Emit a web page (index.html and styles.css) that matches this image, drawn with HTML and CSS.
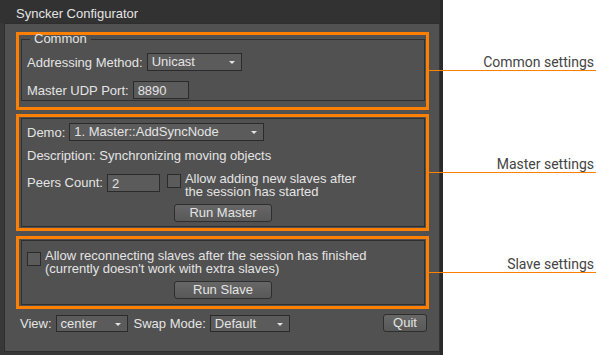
FILE: index.html
```html
<!DOCTYPE html>
<html lang="en">
<head>
    <meta charset="UTF-8">
    <title>Syncker Configurator</title>
    <link rel="stylesheet" href="styles.css">
</head>
<body>

<div class="window">
    <div class="title">Syncker Configurator</div>

    <div class="panel">
        <div class="mark mark-common">
            <fieldset class="group">
                <legend>Common</legend>
                <div class="row row-addr">
                    <span>Addressing Method:</span>
                    <div class="combo combo-addr">Unicast<i class="arrow"></i></div>
                </div>
                <div class="row row-port">
                    <span>Master UDP Port:</span>
                    <div class="edit edit-port">8890</div>
                </div>
            </fieldset>
            <div class="callout callout-common">Common settings</div>
        </div>

        <div class="mark mark-master">
            <div class="group">
                <div class="row row-demo">
                    <span>Demo:</span>
                    <div class="combo combo-demo">1. Master::AddSyncNode<i class="arrow"></i></div>
                </div>
                <div class="row row-desc">Description: Synchronizing moving objects</div>
                <div class="row row-peers">
                    <span>Peers Count:</span>
                    <div class="edit edit-peers">2</div>
                    <div class="check"></div>
                    <span class="check-text">Allow adding new slaves after<br>the session has started</span>
                </div>
                <div class="btn-row"><div class="btn btn-run">Run Master</div></div>
            </div>
            <div class="callout callout-master">Master settings</div>
        </div>

        <div class="mark mark-slave">
            <div class="group">
                <div class="row row-reconnect">
                    <div class="check"></div>
                    <span class="check-text">Allow reconnecting slaves after the session has finished<br>(currently doesn't work with extra slaves)</span>
                </div>
                <div class="btn-row btn-row-slave"><div class="btn btn-run">Run Slave</div></div>
            </div>
            <div class="callout callout-slave">Slave settings</div>
        </div>

        <div class="footer">
            <span>View:</span>
            <div class="combo combo-view">center<i class="arrow"></i></div>
            <span class="swap-label">Swap Mode:</span>
            <div class="combo combo-swap">Default<i class="arrow"></i></div>
            <div class="btn btn-quit">Quit</div>
        </div>
    </div>
</div>

</body>
</html>
```

FILE: styles.css
```css
body {
    margin: 0;
    background: #fff;
    font-family: "Liberation Sans", Arial, sans-serif;
    font-size: 13px;
    color: #e4e4e4;
}
.window {
    width: 443px;
    height: 355px;
    background: #383838;
    border-right: 3px solid #2a2a2a;
    box-sizing: border-box;
    display: flex;
    flex-direction: column;
}
.title {
    height: 23px;
    line-height: 28px;
    padding-left: 16px;
    background: #323232;
    font-size: 13px;
}
.panel {
    margin: 0 0 3px 4px;
    flex: 1;
    background: #515151;
    border: 1px solid #2e2e2e;
    border-right-color: #333;
    padding: 8px 0 0 11px;
    display: flex;
    flex-direction: column;
}
.mark {
    position: relative;
    width: 413px;
    border: 3px solid #ff7f00;
    box-sizing: border-box;
    padding: 1px 1px 1px 2px;
}
.mark-common { height: 78px; }
.mark-master { height: 117px; margin-top: 4px; }
.mark-slave { height: 73px; margin-top: 5px; }

.group {
    margin: 0;
    height: 100%;
    box-sizing: border-box;
    border: 1px solid #2f2f2f;
    padding: 0 0 0 5px;
}
fieldset.group {
    height: auto;
    margin-top: -4px;
    padding-top: 2px;
    min-height: 69px;
}
legend {
    padding: 0 4px;
    margin-left: 3px;
    line-height: 14px;
}

.row {
    display: flex;
    align-items: center;
    gap: 4px;
}
.row-addr { height: 18px; margin-top: 5px; }
.row-port { height: 18px; margin-top: 10px; }
.row-demo { height: 18px; margin-top: 4px; }
.row-desc { height: 16px; margin-top: 6px; }
.row-peers { height: 18px; margin-top: 11px; align-items: flex-start; }
.row-reconnect { margin-top: 10px; align-items: flex-start; }

.combo, .edit {
    height: 18px;
    box-sizing: border-box;
    background: #5b5b5b;
    border: 1px solid #2b2b2b;
    padding-left: 4px;
    line-height: 16px;
    position: relative;
}
.edit { line-height: 18px; }
.combo-addr { width: 95px; }
.edit-port { width: 56px; }
.combo-demo { width: 195px; }
.edit-peers { width: 53px; }
.combo-view { width: 72px; height: 17px; line-height: 15px; }
.combo-swap { width: 80px; height: 17px; line-height: 15px; }

.arrow {
    position: absolute;
    right: 6px;
    top: 7px;
    border-left: 3px solid transparent;
    border-right: 3px solid transparent;
    border-top: 3px solid #e4e4e4;
}

.check {
    width: 12px;
    height: 12px;
    background: #5b5b5b;
    border: 1px solid #2b2b2b;
    flex: none;
}
.row-peers .check { margin-left: 3px; }
.row-reconnect .check { margin-left: 0; margin-top: 1px; }
.check-text { line-height: 13px; margin-top: -2px; }
.row-peers span:first-child { margin-top: 1px; }

.btn-row {
    display: flex;
    justify-content: center;
    margin: 12px 0 0 -5px;
}
.btn-row-slave { margin-top: 6px; }
.btn {
    height: 18px;
    box-sizing: border-box;
    border: 1px solid #2e2e2e;
    border-radius: 3px;
    background: linear-gradient(#676767, #585858);
    text-align: center;
    line-height: 16px;
    font-size: 13px;
}
.btn-run { width: 98px; }

.footer {
    display: flex;
    align-items: center;
    gap: 4px;
    margin-top: 5px;
    padding-left: 4px;
    width: 407px;
}
.swap-label { margin-left: 2px; }
.btn-quit {
    width: 44px;
    margin-left: auto;
}

.callout {
    position: absolute;
    right: -170px;
    width: 167px;
    height: 17px;
    border-bottom: 1px solid #ff7f00;
    box-sizing: border-box;
    text-align: right;
    padding-right: 2px;
    color: #444;
    font-family: Roboto, sans-serif;
    font-size: 14px;
    line-height: 16px;
}
.callout-common { top: 19px; }
.callout-master { top: 39px; }
.callout-slave { top: 17px; }
```
